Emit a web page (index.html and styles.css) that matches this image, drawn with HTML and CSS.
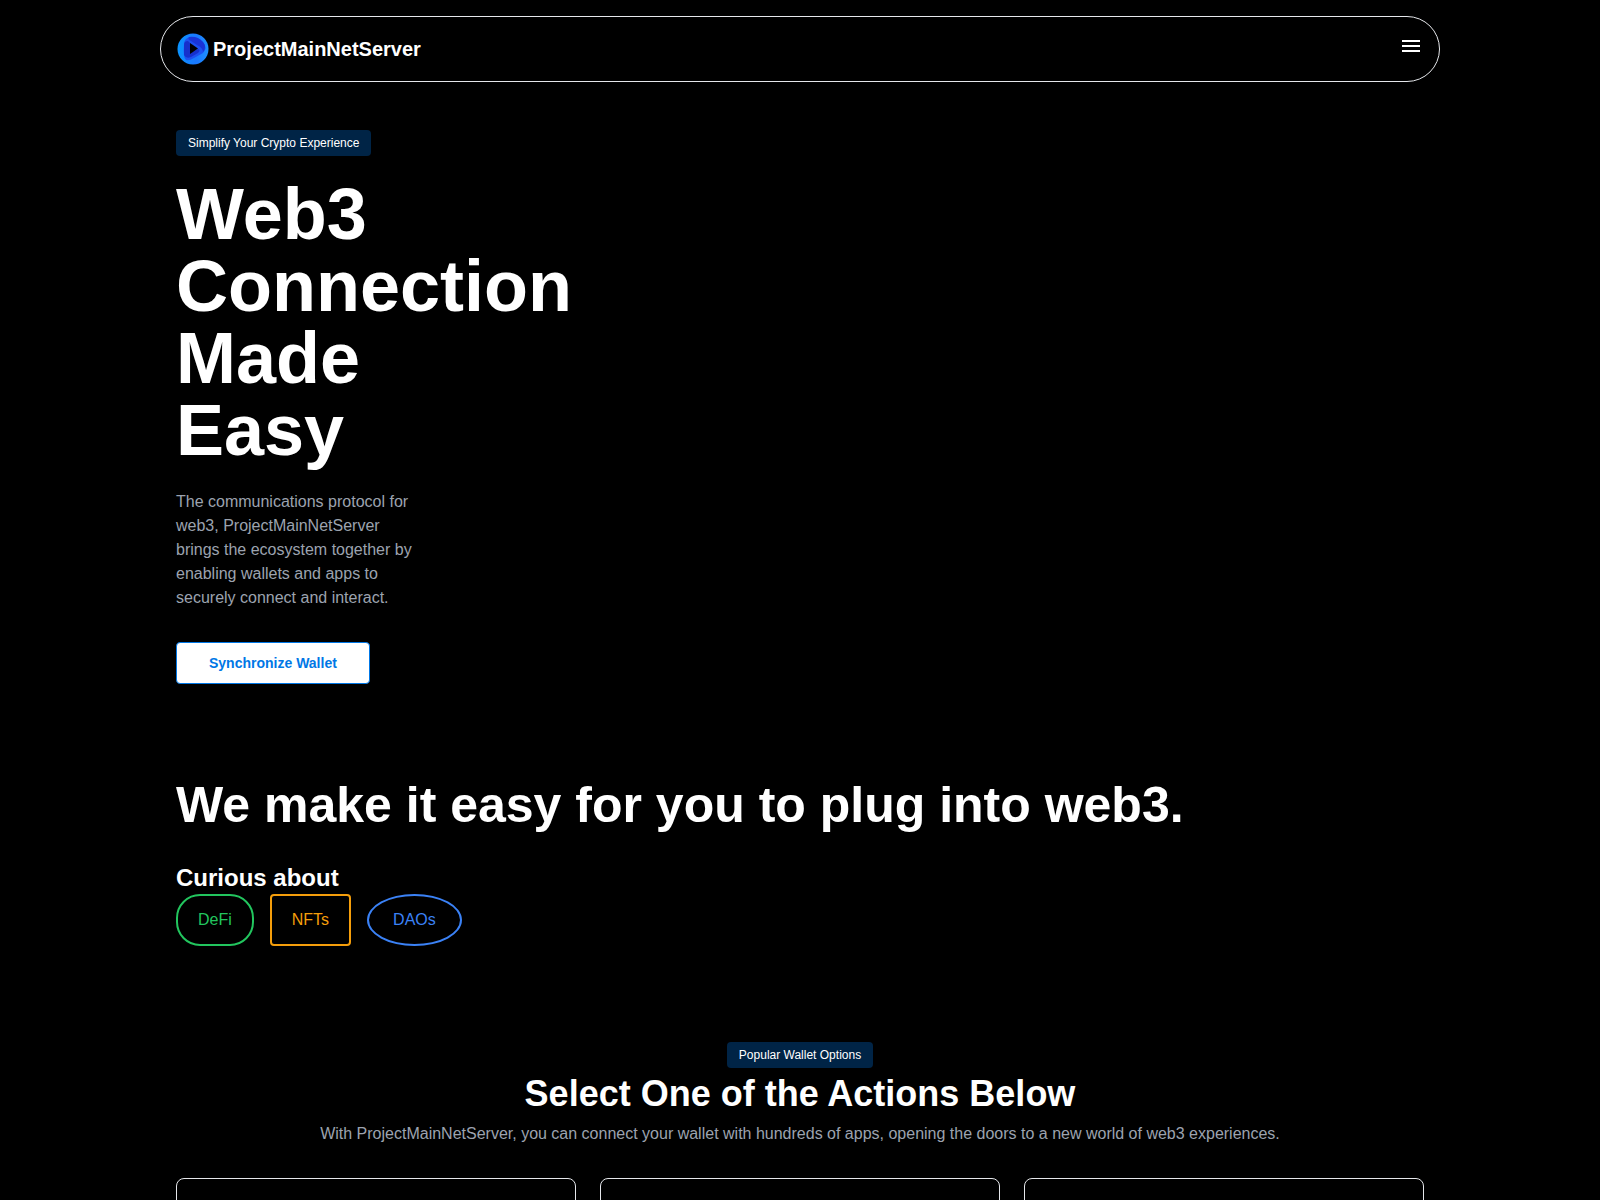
FILE: index.html
```
<!DOCTYPE html>
<html lang="en">
<head>
    <meta charset="UTF-8">
    <meta name="viewport" content="width=device-width, initial-scale=1.0">
    <title>ProjectMainNetServer</title>
    <link rel="stylesheet" href="styles.css">
</head>
<body>
    <div class="container">
        <header class="navbar">
            <a class="brand" href="#">
                <svg class="logo" viewBox="0 0 32 32" aria-hidden="true">
                    <defs>
                        <linearGradient id="ring" x1="0" y1="0.5" x2="1" y2="0.5">
                            <stop offset="0" stop-color="#0a94ff"/>
                            <stop offset="0.6" stop-color="#1a78ff"/>
                            <stop offset="1" stop-color="#1e90ff"/>
                        </linearGradient>
                    </defs>
                    <circle cx="16" cy="16" r="15.5" fill="url(#ring)"/>
                    <path d="M7 12Q7 5 13 4Q21 4 26 9Q31 15 26 20L17 25Q12 28 9 27Q6 25 7 12Z" fill="#1c50f0"/>
                    <path d="M12 4Q21 3 26 9Q30 14 26 19Q26 15 20 12L14 8Q10 6 12 4Z" fill="#1a34d6"/>
                    <path d="M7 12Q7 8 11 8L13 10V20L21 16Q24 17 21 20L14 24Q9 26 7 22Z" fill="#1630cc"/>
                    <path d="M13 10L21 15.5L13 21Z" fill="#000"/>
                </svg>
                <span>ProjectMainNetServer</span>
            </a>
            <button class="menu-btn" type="button" aria-label="Open menu">
                <svg width="24" height="24" viewBox="0 0 24 24" fill="currentColor" aria-hidden="true">
                    <path d="M3 18h18v-2H3v2zm0-5h18v-2H3v2zm0-7v2h18V6H3z"/>
                </svg>
            </button>
        </header>

        <main>
            <section class="hero">
                <span class="badge">Simplify Your Crypto Experience</span>
                <h1>Web3 Connection Made Easy</h1>
                <p>The communications protocol for web3, ProjectMainNetServer brings the ecosystem together by enabling wallets and apps to securely connect and interact.</p>
                <button class="sync-btn" type="button">Synchronize Wallet</button>
            </section>

            <section class="about">
                <h2>We make it easy for you to plug into web3.</h2>
                <h3>Curious about</h3>
                <div class="topics">
                    <span class="topic defi">DeFi</span>
                    <span class="topic nfts">NFTs</span>
                    <span class="topic daos">DAOs</span>
                </div>
            </section>

            <section class="options">
                <span class="badge">Popular Wallet Options</span>
                <h2>Select One of the Actions Below</h2>
                <p>With ProjectMainNetServer, you can connect your wallet with hundreds of apps, opening the doors to a new world of web3 experiences.</p>
                <div class="cards">
                    <div class="card"></div>
                    <div class="card"></div>
                    <div class="card"></div>
                </div>
            </section>
        </main>
    </div>
</body>
</html>
```
FILE: styles.css
```
* {
    box-sizing: border-box;
}
html {
    background-color: #000;
    scrollbar-width: none;
}
body {
    margin: 0;
    background-color: #000;
    color: #fff;
    font-family: "Liberation Sans", Arial, sans-serif;
    font-size: 16px;
    line-height: 24px;
}
h1, h2, h3, p {
    margin: 0;
}
.container {
    max-width: 1280px;
    margin: 0 auto;
    padding-top: 16px;
}

/* header */
.navbar {
    display: flex;
    justify-content: space-between;
    align-items: center;
    padding: 16px;
    border: 1px solid #e5e7eb;
    border-radius: 33px;
}
.brand {
    display: flex;
    align-items: center;
    gap: 4px;
    color: #fff;
    font-size: 20px;
    font-weight: bold;
    text-decoration: none;
}
.logo {
    width: 32px;
    height: 32px;
}
.menu-btn {
    padding: 0;
    border: 0;
    background: none;
    color: #fff;
    font: inherit;
    cursor: pointer;
}

.badge {
    padding: 5px 12px;
    border-radius: 4px;
    background-color: #002446;
    font-size: 12px;
    line-height: 16px;
}

/* hero */
.hero {
    display: flex;
    flex-direction: column;
    align-items: flex-start;
    max-width: 272px;
    padding: 48px 16px;
}
.hero h1 {
    margin: 22px 0 24px;
    font-size: 72px;
    line-height: 72px;
    width: 100%;
}
.hero p {
    margin-bottom: 32px;
    color: #9ca3af;
}
.sync-btn {
    padding: 10px 32px;
    border: 1px solid #0077e6;
    border-radius: 4px;
    background-color: #fff;
    color: #0077e6;
    font-family: inherit;
    font-size: 14px;
    font-weight: bold;
    line-height: 20px;
    cursor: pointer;
}

/* about */
.about {
    padding: 48px 16px;
}
.about h2 {
    margin-bottom: 32px;
    font-size: 50px;
    line-height: 50px;
}
.about h3 {
    font-size: 24px;
    line-height: 32px;
}
.topics {
    display: flex;
    gap: 16px;
}
.topic {
    padding: 12px 20px;
    border: 2px solid;
}
.defi {
    border-radius: 24px;
    color: #22c55e;
}
.nfts {
    border-radius: 4px;
    color: #f59e0b;
}
.daos {
    padding: 12px 24px;
    border-radius: 50%;
    color: #3b82f6;
}

/* wallet options */
.options {
    display: flex;
    flex-direction: column;
    align-items: center;
    padding: 48px 16px;
    text-align: center;
}
.options h2 {
    margin: 6px 0 8px;
    font-size: 36px;
    line-height: 40px;
}
.options p {
    margin-bottom: 32px;
    color: #9ca3af;
}
.cards {
    display: grid;
    grid-template-columns: repeat(3, 1fr);
    gap: 24px;
    width: 100%;
}
.card {
    min-height: 240px;
    border: 1px solid #e5e7eb;
    border-radius: 8px;
}
```
